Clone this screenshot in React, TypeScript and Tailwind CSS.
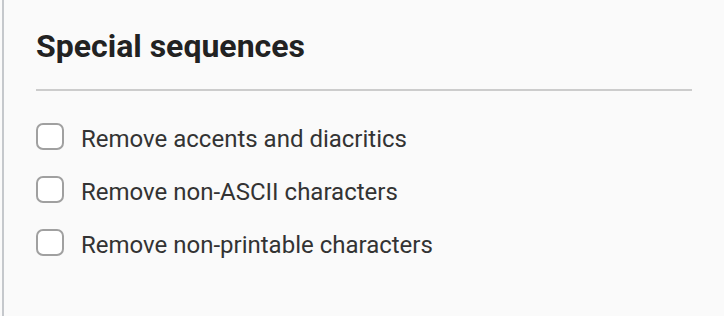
import React from "react";

const items = [
  "Remove accents and diacritics",
  "Remove non-ASCII characters",
  "Remove non-printable characters",
];

export default function App() {
  return (
    <div className="w-[724px] h-[316px] bg-[#fafafa] flex overflow-hidden" style={{ fontFamily: "Roboto, 'Liberation Sans', sans-serif" }}>
      <div className="w-[2px] ml-[2px] bg-[#c5c8cc] shrink-0" />
      <div className="flex-1 pl-[32px] pr-[32px] pt-[26px]">
        <h2 className="text-[32px] leading-[40px] font-bold text-[#222222]">Special sequences</h2>
        <div className="mt-[23px] h-[2px] bg-[#cccccc]" />
        <div className="mt-[32px] flex flex-col gap-[26px]">
          {items.map((t) => (
            <label key={t} className="flex items-start gap-[17px] h-[27px]">
              <span className="w-[28px] h-[27px] rounded-[7px] border-2 border-[#a0a0a0] bg-white shrink-0" />
              <span className="mt-[3px] text-[24px] text-[#333333] leading-[27px] whitespace-nowrap">{t}</span>
            </label>
          ))}
        </div>
      </div>
    </div>
  );
}
